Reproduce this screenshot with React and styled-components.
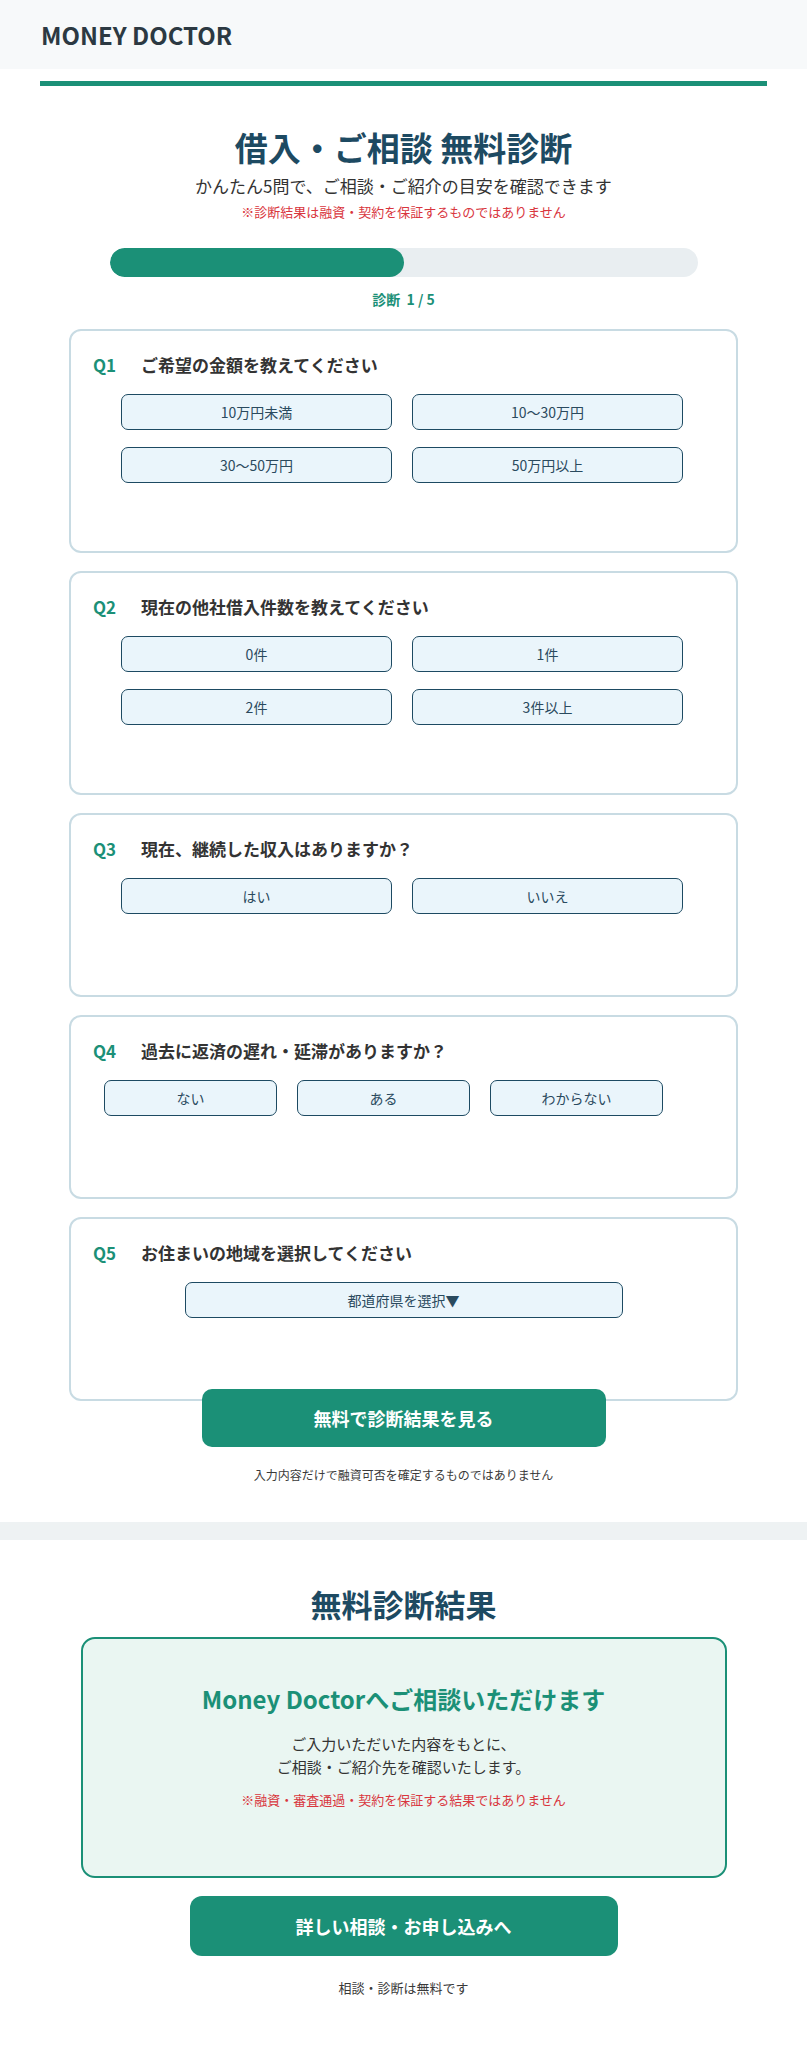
import React from 'react';
import styled, { createGlobalStyle } from 'styled-components';

const GlobalStyle = createGlobalStyle`
  body {
    margin: 0;
    background: #ffffff;
    font-family: "Noto Sans CJK JP", "Noto Sans", sans-serif;
    color: #333333;
  }
  * { box-sizing: border-box; }
`;

const green = '#1b9077';
const navy = '#1d4a62';

const Header = styled.header`
  height: 69px;
  background: #f7f9fa;
  display: flex;
  align-items: center;
  padding-left: 41px;
`;

const Logo = styled.div`
  font-size: 24px;
  font-weight: 700;
  color: #2c3942;
  letter-spacing: 0;
`;

const Diagnosis = styled.section`
  padding: 12px 40px 38px;
`;

const Rule = styled.div`
  height: 5px;
  background: ${green};
`;

const Hero = styled.div`
  text-align: center;
  margin-top: 39px;
`;

const Title = styled.h1`
  margin: 0;
  font-size: 33px;
  line-height: 44px;
  font-weight: 700;
  color: ${navy};
`;

const Lead = styled.p`
  margin: 4px 0 0;
  font-size: 17px;
  line-height: 26px;
  color: #333;
`;

const Warning = styled.p`
  margin: ${(p) => p.$gap || 3}px 0 0;
  font-size: 13px;
  line-height: 20px;
  color: #d9363e;
`;

const Track = styled.div`
  width: 588px;
  height: 29px;
  margin: 26px auto 0;
  border-radius: 15px;
  background: #e9eef1;
  overflow: hidden;
`;

const Fill = styled.div`
  height: 100%;
  border-radius: 15px;
  background: ${green};
`;

const Step = styled.div`
  margin-top: 12px;
  text-align: center;
  font-size: 14px;
  line-height: 20px;
  font-weight: 700;
  color: ${green};
`;

const Questions = styled.div`
  width: 669px;
  margin: 20px auto 0;
  display: flex;
  flex-direction: column;
  gap: 18px;
`;

const Card = styled.div`
  min-height: 184px;
  border: 2px solid #c8dbe3;
  border-radius: 12px;
  background: #fff;
  padding: 20px 22px 68px;
`;

const QuestionRow = styled.div`
  display: flex;
  align-items: center;
  height: 26px;
`;

const QLabel = styled.span`
  width: 48px;
  font-size: 17px;
  font-weight: 700;
  color: ${green};
`;

const QText = styled.span`
  font-size: 17px;
  font-weight: 700;
  color: #333;
`;

const Options = styled.div`
  display: grid;
  grid-template-columns: repeat(${(p) => p.$cols}, ${(p) => p.$width}px);
  column-gap: 20px;
  row-gap: 17px;
  margin-top: 17px;
  margin-left: ${(p) => p.$offset}px;
`;

const Option = styled.button`
  height: 36px;
  width: ${(p) => (p.$wide ? '438px' : 'auto')};
  border: 1px solid ${navy};
  border-radius: 7px;
  background: #eaf5fb;
  font-family: inherit;
  font-size: 14px;
  color: #2a4a5e;
  cursor: pointer;
`;

const SelectWrap = styled.div`
  display: flex;
  justify-content: center;
  margin-top: 17px;
`;

const Primary = styled.button`
  display: block;
  position: relative;
  margin: ${(p) => p.$margin};
  width: ${(p) => p.$w}px;
  height: ${(p) => p.$h}px;
  border: none;
  border-radius: ${(p) => p.$r}px;
  background: ${green};
  color: #fff;
  font-family: inherit;
  font-size: 18px;
  font-weight: 700;
  cursor: pointer;
`;

const Note = styled.p`
  margin: ${(p) => p.$top}px 0 0;
  text-align: center;
  font-size: ${(p) => p.$size}px;
  line-height: 18px;
  color: #3a3a3a;
`;

const Divider = styled.div`
  height: 18px;
  background: #eef2f3;
`;

const Result = styled.section`
  padding: 43px 40px 40px;
  text-align: center;
`;

const ResultTitle = styled.h2`
  margin: 0;
  font-size: 31px;
  line-height: 42px;
  font-weight: 700;
  color: ${navy};
`;

const ResultBox = styled.div`
  width: 646px;
  margin: 12px auto 0;
  border: 2px solid ${green};
  border-radius: 14px;
  background: #eaf6f2;
  padding: 43px 20px 66px;
`;

const ResultHead = styled.h3`
  margin: 0;
  font-size: 24px;
  line-height: 34px;
  font-weight: 700;
  color: ${green};
`;

const ResultBody = styled.p`
  margin: 16px 0 0;
  font-size: 15px;
  line-height: 23px;
  color: #333;
`;

const questions = [
  { n: 'Q1', text: 'ご希望の金額を教えてください', opts: ['10万円未満', '10〜30万円', '30〜50万円', '50万円以上'], cols: 2 },
  { n: 'Q2', text: '現在の他社借入件数を教えてください', opts: ['0件', '1件', '2件', '3件以上'], cols: 2 },
  { n: 'Q3', text: '現在、継続した収入はありますか？', opts: ['はい', 'いいえ'], cols: 2 },
  { n: 'Q4', text: '過去に返済の遅れ・延滞がありますか？', opts: ['ない', 'ある', 'わからない'], cols: 3 },
];

export default function App() {
  return (
    <>
      <GlobalStyle />
      <Header>
        <Logo>MONEY DOCTOR</Logo>
      </Header>
      <Diagnosis>
        <Rule />
        <Hero>
          <Title>借入・ご相談 無料診断</Title>
          <Lead>かんたん5問で、ご相談・ご紹介の目安を確認できます</Lead>
          <Warning>※診断結果は融資・契約を保証するものではありません</Warning>
        </Hero>
        <Track>
          <Fill style={{ width: '50%' }} />
        </Track>
        <Step>診断&nbsp;&nbsp;1 / 5</Step>
        <Questions>
          {questions.map((q) => (
            <Card key={q.n}>
              <QuestionRow>
                <QLabel>{q.n}</QLabel>
                <QText>{q.text}</QText>
              </QuestionRow>
              {q.cols === 2 ? (
                <Options $cols={2} $width={271} $offset={28}>
                  {q.opts.map((o) => (
                    <Option key={o}>{o}</Option>
                  ))}
                </Options>
              ) : (
                <Options $cols={3} $width={173} $offset={11}>
                  {q.opts.map((o) => (
                    <Option key={o}>{o}</Option>
                  ))}
                </Options>
              )}
            </Card>
          ))}
          <Card>
            <QuestionRow>
              <QLabel>Q5</QLabel>
              <QText>お住まいの地域を選択してください</QText>
            </QuestionRow>
            <SelectWrap>
              <Option $wide>都道府県を選択▼</Option>
            </SelectWrap>
          </Card>
        </Questions>
        <Primary $margin="-12px auto 0" $w={404} $h={58} $r={10}>
          無料で診断結果を見る
        </Primary>
        <Note $top={19} $size={12}>入力内容だけで融資可否を確定するものではありません</Note>
      </Diagnosis>
      <Divider />
      <Result>
        <ResultTitle>無料診断結果</ResultTitle>
        <ResultBox>
          <ResultHead>Money Doctorへご相談いただけます</ResultHead>
          <ResultBody>
            ご入力いただいた内容をもとに、
            <br />
            ご相談・ご紹介先を確認いたします。
          </ResultBody>
          <Warning $gap={12}>※融資・審査通過・契約を保証する結果ではありません</Warning>
        </ResultBox>
        <Primary $margin="18px auto 0" $w={428} $h={60} $r={12}>
          詳しい相談・お申し込みへ
        </Primary>
        <Note $top={23} $size={13}>相談・診断は無料です</Note>
      </Result>
    </>
  );
}
